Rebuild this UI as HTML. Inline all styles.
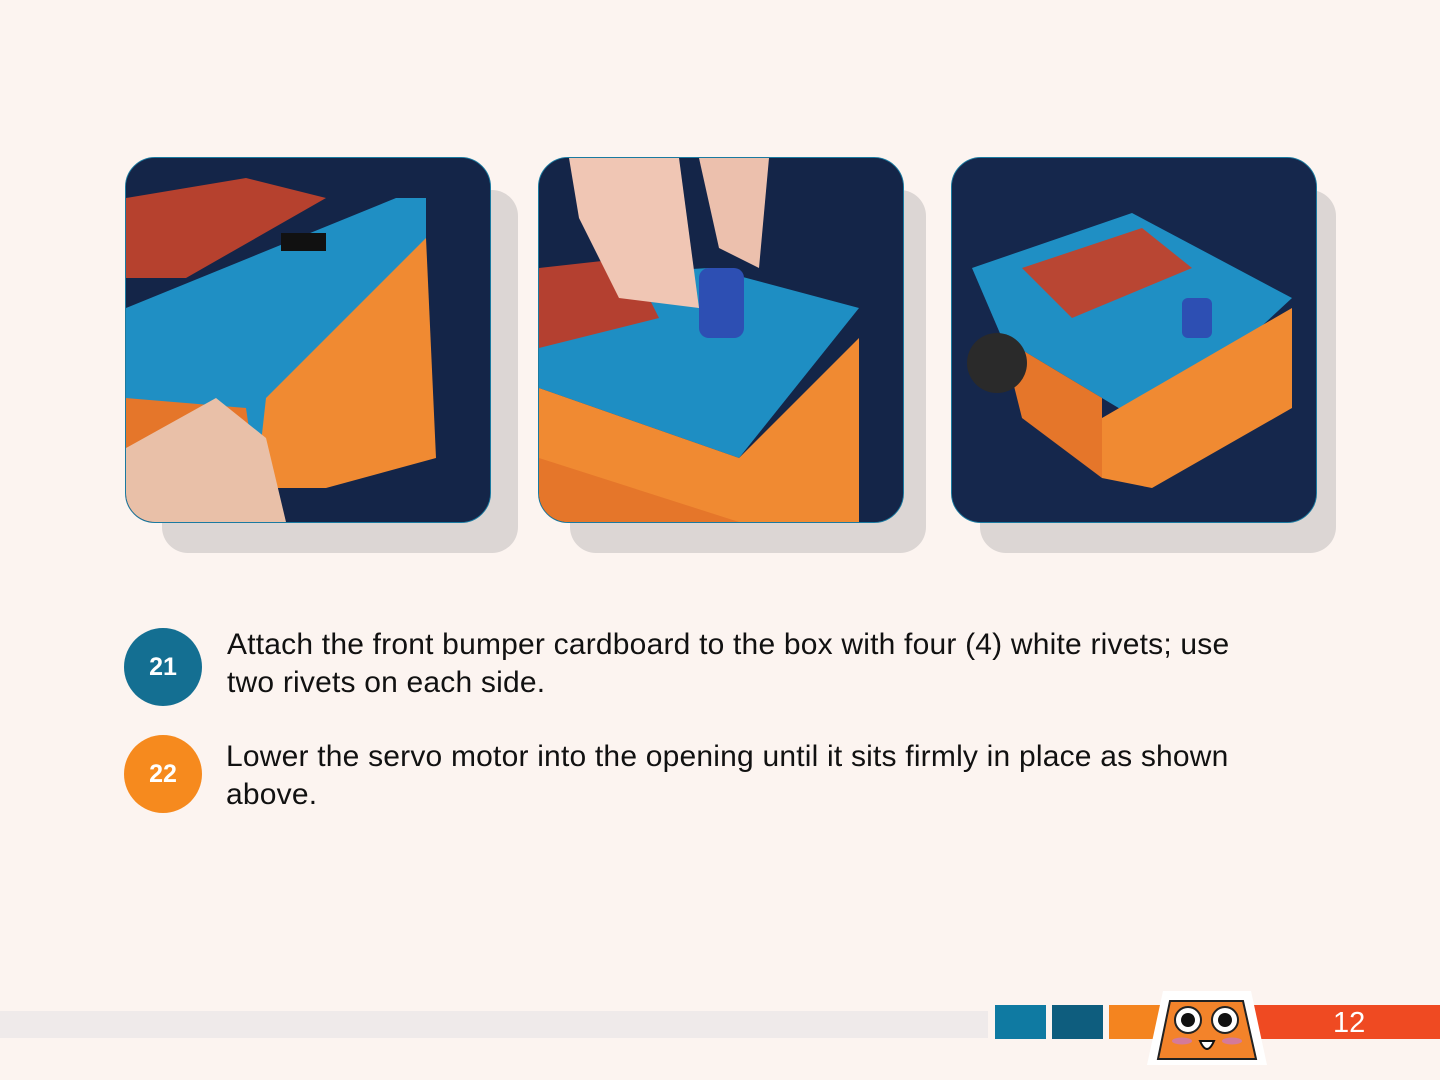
<!DOCTYPE html>
<html><head><meta charset="utf-8"><style>
body{margin:0;width:1440px;height:1080px;background:#fcf4f0;position:relative;overflow:hidden;font-family:"Liberation Sans",sans-serif}
.sh{position:absolute;background:#dcd6d4;border-radius:26px}
.card{position:absolute;width:364px;height:364px;border:1.5px solid #1a7aa0;border-radius:30px;overflow:hidden;background:#16264a}
.card svg{position:absolute;left:0;top:0}
.circ{position:absolute;width:78px;height:78px;border-radius:50%;color:#fff;font-weight:bold;font-size:25px;text-align:center;line-height:78px}
.txt{position:absolute;left:227px;font-size:30px;line-height:38px;color:#111;width:1012px;letter-spacing:0.2px}
</style></head><body>
<div class="sh" style="left:162px;top:190px;width:356px;height:363px"></div>
<div class="sh" style="left:570px;top:190px;width:356px;height:363px"></div>
<div class="sh" style="left:980px;top:190px;width:356px;height:363px"></div>

<div class="card" style="left:125px;top:157px"><svg width="364" height="364">
<rect width="364" height="364" fill="#142548"/>
<polygon points="0,150 0,270 130,330 300,230 300,40 270,40" fill="#1f8fc4"/>
<polygon points="0,40 120,20 200,40 60,120 0,120" fill="#b6412e"/>
<polygon points="130,330 140,240 300,80 310,300 200,330" fill="#f08a32"/>
<polygon points="0,240 120,250 130,320 0,300" fill="#e5762a"/>
<polygon points="0,364 0,290 90,240 140,280 160,364" fill="#e9c0a8"/>
<rect x="155" y="75" width="45" height="18" fill="#111"/>
</svg></div>

<div class="card" style="left:538px;top:157px"><svg width="364" height="364">
<rect width="364" height="364" fill="#142548"/>
<polygon points="0,120 170,110 320,150 200,300 0,230" fill="#1e8ec3"/>
<polygon points="0,230 200,300 320,180 320,364 0,364" fill="#f08a32"/>
<polygon points="0,300 200,364 0,364" fill="#e5762a"/>
<polygon points="0,110 90,100 120,160 0,190" fill="#b44030"/>
<polygon points="30,0 140,0 160,150 80,140 40,60" fill="#f0c6b4"/>
<polygon points="160,0 230,0 220,110 180,90" fill="#ecc0ad"/>
<rect x="160" y="110" width="45" height="70" rx="10" fill="#2d4fb3"/>
</svg></div>

<div class="card" style="left:951px;top:157px"><svg width="364" height="364">
<rect width="364" height="364" fill="#15274c"/>
<polygon points="20,110 180,55 340,140 200,270 50,180" fill="#1f8fc4"/>
<polygon points="70,110 190,70 240,110 120,160" fill="#b94633"/>
<polygon points="150,260 340,150 340,250 200,330 150,320" fill="#f08a32"/>
<polygon points="50,180 150,240 150,320 70,260" fill="#e5762a"/>
<circle cx="45" cy="205" r="30" fill="#2a2a2a"/>
<rect x="230" y="140" width="30" height="40" rx="6" fill="#2d4fb3"/>
</svg></div>

<div class="circ" style="left:124px;top:628px;background:#146f92">21</div>
<div class="txt" style="top:626px">Attach the front bumper cardboard to the box with four (4) white rivets; use two rivets on each side.</div>
<div class="circ" style="left:124px;top:735px;background:#f68a1e">22</div>
<div class="txt" style="top:738px;left:226px">Lower the servo motor into the opening until it sits firmly in place as shown above.</div>

<div style="position:absolute;left:0;top:1011px;width:988px;height:27px;background:#efeaea"></div>
<div style="position:absolute;left:995px;top:1005px;width:51px;height:34px;background:#0f7aa2"></div>
<div style="position:absolute;left:1052px;top:1005px;width:51px;height:34px;background:#0e5d7e"></div>
<div style="position:absolute;left:1109px;top:1005px;width:60px;height:34px;background:#f4841f"></div>
<div style="position:absolute;left:1250px;top:1005px;width:190px;height:34px;background:#ef4a22;color:#fff;font-size:29px;line-height:36px"><span style="position:absolute;left:83px">12</span></div>
<svg style="position:absolute;left:1145px;top:985px" width="125" height="85">
<polygon points="18,6 106,6 122,80 2,80" fill="#fff"/>
<polygon points="25,16 98,16 111,74 13,74" fill="#f3832a" stroke="#222" stroke-width="2"/>
<circle cx="43" cy="35" r="13" fill="#fff" stroke="#222" stroke-width="2"/><circle cx="43" cy="35" r="7" fill="#111"/>
<circle cx="80" cy="35" r="13" fill="#fff" stroke="#222" stroke-width="2"/><circle cx="80" cy="35" r="7" fill="#111"/>
<ellipse cx="37" cy="56" rx="10" ry="3.5" fill="#d47a9a"/><ellipse cx="87" cy="56" rx="10" ry="3.5" fill="#d47a9a"/>
<path d="M55 56 Q62 72 69 56 Z" fill="#fff" stroke="#111" stroke-width="2"/>
</svg>
</body></html>
